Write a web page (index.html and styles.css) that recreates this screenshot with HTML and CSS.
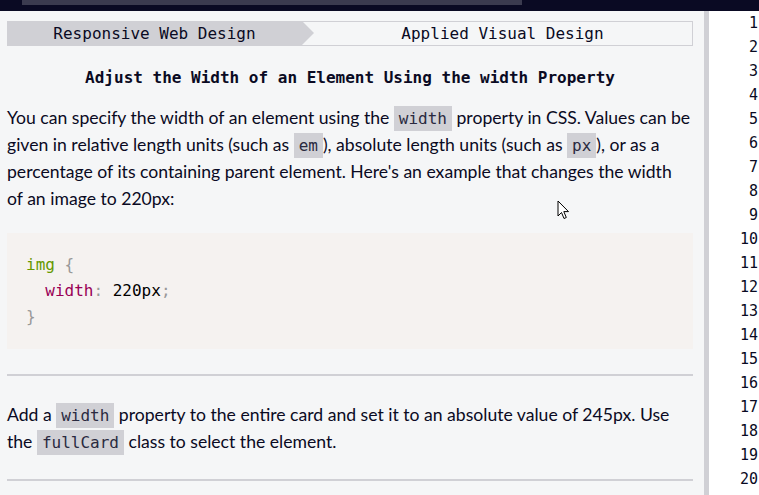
FILE: index.html
```html
<!DOCTYPE html>
<html lang="en">
<head>
<meta charset="utf-8">
<title>Adjust the Width of an Element</title>
<link rel="stylesheet" href="styles.css">
</head>
<body>
<div class="topbar"><div class="topbar-tab"></div></div>
<div class="main">
  <section class="lesson">
    <nav class="crumbs">
      <div class="crumb crumb-first">Responsive Web Design</div>
      <div class="crumb crumb-second">Applied Visual Design</div>
    </nav>
    <h1 class="title">Adjust the Width of an Element Using the width Property</h1>
    <p class="text">You can specify the width of an element using the <code>width</code> property in CSS. Values can be given in relative length units (such as <code>em</code>), absolute length units (such as <code>px</code>), or as a percentage of its containing parent element. Here's an example that changes the width of&nbsp;an image to 220px:</p>
    <pre class="codeblock"><span class="sel">img</span> <span class="pun">{</span>
  <span class="prop">width</span><span class="pun">:</span> 220px<span class="pun">;</span>
<span class="pun">}</span></pre>
    <hr class="rule">
    <p class="text task">Add a <code>width</code> property to the entire card and set it to an absolute value of 245px. Use the <code>fullCard</code> class to select the element.</p>
    <hr class="rule">
    <svg class="cursor" width="13" height="21" viewBox="0 0 13 21"><path d="M1 1 L1 16 L4.5 12.5 L7 18.5 L9.3 17.5 L6.8 11.6 L11.5 11.6 Z" fill="#fff" stroke="#000" stroke-width="1" stroke-linejoin="miter"/></svg>
  </section>
  <div class="divider"></div>
  <section class="editor">
    <div class="ln">1</div><div class="ln">2</div><div class="ln">3</div><div class="ln">4</div><div class="ln">5</div>
    <div class="ln">6</div><div class="ln">7</div><div class="ln">8</div><div class="ln">9</div><div class="ln">10</div>
    <div class="ln">11</div><div class="ln">12</div><div class="ln">13</div><div class="ln">14</div><div class="ln">15</div>
    <div class="ln">16</div><div class="ln">17</div><div class="ln">18</div><div class="ln">19</div><div class="ln">20</div>
  </section>
</div>
</body>
</html>
```
FILE: styles.css
```css
* { box-sizing: border-box; }
html, body { margin: 0; padding: 0; }
body {
  width: 759px;
  height: 495px;
  overflow: hidden;
  background: #f5f6f7;
  font-family: Lato, "Noto Sans", sans-serif;
  color: #0a0a23;
}
.topbar {
  height: 11px;
  background: #0a0a23;
  padding-left: 22px;
}
.topbar-tab {
  width: 500px;
  height: 5px;
  background: #3b3b4f;
}
.main {
  display: flex;
  height: 484px;
}
.lesson {
  position: relative;
  width: 704px;
  flex: 0 0 704px;
  background: #f5f6f7;
  padding: 10px 11px 0 7px;
  overflow: hidden;
}
.divider {
  flex: 0 0 5px;
  background: #d0d0d5;
}
.editor {
  flex: 1;
  background: #fff;
  font-family: "DejaVu Sans Mono", monospace;
  font-size: 15px;
  color: #0a0a23;
}
.ln {
  height: 24px;
  line-height: 24px;
  text-align: right;
  padding-right: 1px;
}
.crumbs {
  display: flex;
  height: 25px;
  font-family: "DejaVu Sans Mono", monospace;
  font-size: 16px;
  color: #0a0a23;
}
.crumb {
  display: flex;
  align-items: center;
  justify-content: center;
  line-height: 1;
}
.crumb-first {
  position: relative;
  flex: 0 0 295px;
  background: #d0d0d5;
  z-index: 1;
}
.crumb-first::after {
  content: "";
  position: absolute;
  right: -12px;
  top: 0;
  border-top: 12.5px solid transparent;
  border-bottom: 12.5px solid transparent;
  border-left: 12px solid #d0d0d5;
}
.crumb-second {
  flex: 1;
  border: 1px solid #d0d0d5;
  border-left: none;
  padding-left: 11px;
}
.title {
  margin: 20px 0 0;
  font-family: "DejaVu Sans Mono", monospace;
  font-size: 16px;
  font-weight: bold;
  line-height: 24px;
  text-align: center;
  color: #0a0a23;
}
.text {
  margin: 14px 0 0;
  font-size: 17.6px;
  line-height: 27px;
}
.text code {
  font-family: "DejaVu Sans Mono", monospace;
  font-size: 16px;
  line-height: 1;
  background: #d0d0d5;
  color: #2a2a40;
  padding: 3px 5px;
}
.codeblock {
  margin: 21px 0 0;
  padding: 19px 19px;
  background: #f5f2f0;
  font-family: "DejaVu Sans Mono", monospace;
  font-size: 16px;
  line-height: 26px;
  color: #000;
}
.sel { color: #669900; }
.prop { color: #990055; }
.pun { color: #999999; }
.rule {
  margin: 25px 0 0;
  border: none;
  border-top: 2px solid #d0d0d5;
  height: 0;
}
.task { margin-top: 25px; }
.task + .rule { margin-top: 24px; }
.cursor {
  position: absolute;
  left: 557px;
  top: 189px;
}
```
